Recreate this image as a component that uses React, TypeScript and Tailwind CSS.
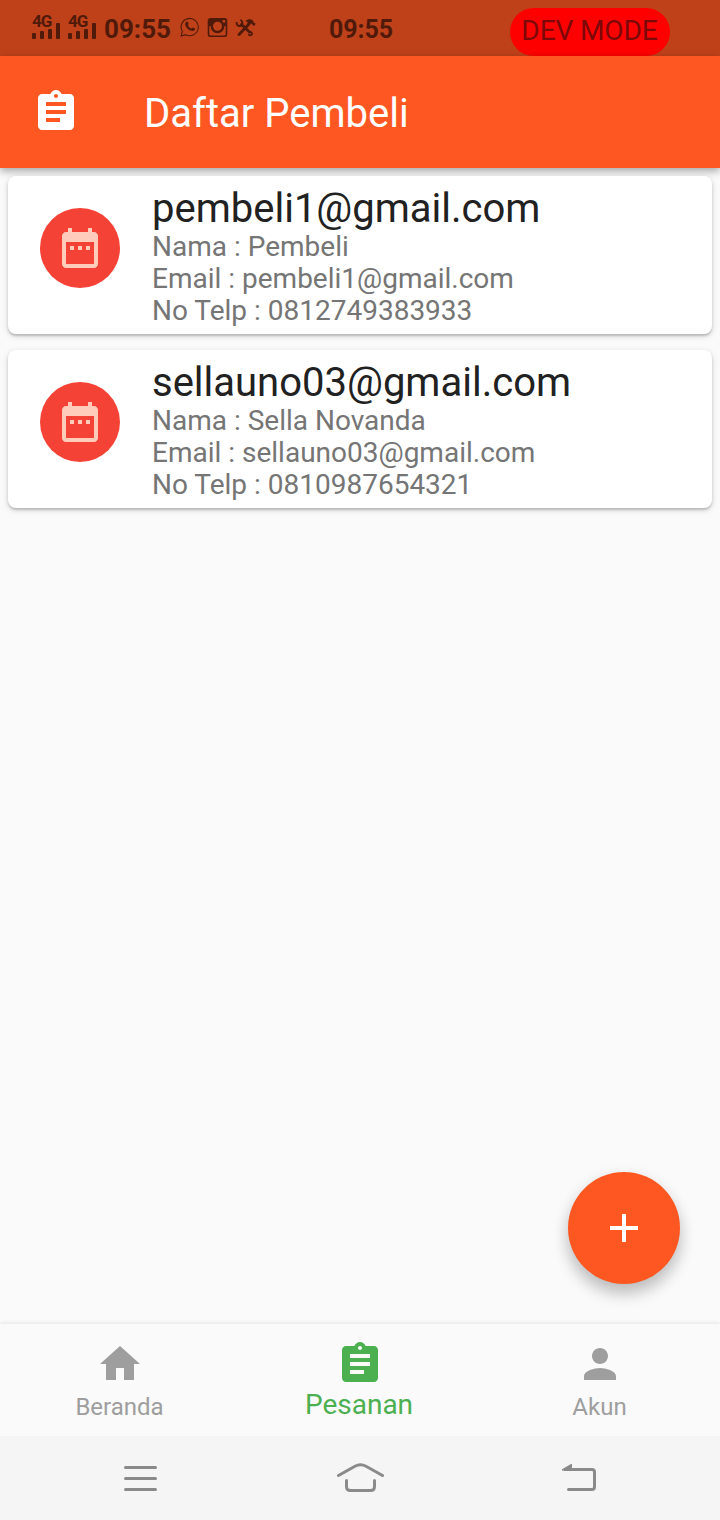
import type { ReactNode } from "react";

const ASSIGNMENT =
  "M19 3h-4.18C14.4 1.84 13.3 1 12 1c-1.3 0-2.4.84-2.82 2H5c-1.1 0-2 .9-2 2v14c0 1.1.9 2 2 2h14c1.1 0 2-.9 2-2V5c0-1.1-.9-2-2-2zm-7 0c.55 0 1 .45 1 1s-.45 1-1 1-1-.45-1-1 .45-1 1-1zm2 14H7v-2h7v2zm3-4H7v-2h10v2zm0-4H7V7h10v2z";
const DATE_RANGE =
  "M9 11H7v2h2v-2zm4 0h-2v2h2v-2zm4 0h-2v2h2v-2zm2-7h-1V2h-2v2H8V2H6v2H5c-1.11 0-1.99.9-1.99 2L3 20c0 1.1.89 2 2 2h14c1.1 0 2-.9 2-2V6c0-1.1-.9-2-2-2zm0 16H5V9h14v11z";
const HOME = "M10 20v-6h4v6h5v-8h3L12 3 2 12h3v8z";
const PERSON =
  "M12 12c2.21 0 4-1.79 4-4s-1.79-4-4-4-4 1.79-4 4 1.79 4 4 4zm0 2c-2.67 0-8 1.34-8 4v2h16v-2c0-2.66-5.33-4-8-4z";
const ADD = "M19 13h-6v6h-2v-6H5v-2h6V5h2v6h6v2z";

function Icon({ d }: { d: string }) {
  return (
    <svg viewBox="0 0 24 24" className="size-12 shrink-0 fill-current">
      <path d={d} />
    </svg>
  );
}

function Signal() {
  return (
    <div className="flex w-7 flex-col">
      <span className="h-3 text-[17px] leading-[13px] font-bold tracking-[-1px]">4G</span>
      <svg viewBox="0 0 28 16" className="-mt-1 h-4 w-7 fill-current">
        <rect x="0" y="10" width="4" height="6" rx="1" />
        <rect x="8" y="8" width="4" height="8" rx="1" />
        <rect x="16" y="6" width="4" height="10" rx="1" />
        <rect x="24" y="0" width="4" height="16" rx="1" />
      </svg>
    </div>
  );
}

function StatusBar() {
  return (
    <div className="flex h-14 shrink-0 items-start bg-[#bf411a] pl-8 text-[#501a0a]">
      <div className="flex gap-2 pt-[15px]">
        <Signal />
        <Signal />
      </div>
      <span className="ml-2 w-[76px] pt-[13px] text-[26px] leading-8 font-bold whitespace-nowrap">09:55</span>
      <svg viewBox="0 0 20 20" className="mt-[17px] size-5" fill="none" stroke="currentColor" strokeWidth="1.1">
        <path d="M1.2 19l1.1-4.6A8.6 8.6 0 1 1 5.8 17.700z" />
        <path
          d="M6.200 4.900c.7-.6 1.500-.3 1.800.4l.6 1.500c.2.6-.8 1.100-.6 1.600.7 1.400 1.800 2.400 3.300 3 .5.2 1-1.200 1.600-.9l1.900.9c.6.3.4 1.100-.1 1.700-1.100 1.200-3 1-4.800.1-2-1-3.700-2.700-4.400-4.500-.6-1.500-.4-2.900.7-3.800z"
          fill="currentColor"
          stroke="none"
        />
      </svg>
      <svg viewBox="0 0 21 20" className="ml-[7px] mt-[17px] h-5 w-[21px]" fill="none" stroke="currentColor">
        <rect x="1.500" y="1.700" width="18" height="17.500" rx="2" strokeWidth="1.600" />
        <path d="M1.500 8V3.500L3.500 1.500H18.500l1 1.500v6h-3v-1h-12v1h-3z" fill="currentColor" stroke="none" />
        <circle cx="10.500" cy="9.300" r="5.700" strokeWidth="2.400" fill="#bf411a" />
        <rect x="15.600" y="3" width="2.600" height="2.600" fill="#bf411a" stroke="none" />
      </svg>
      <svg viewBox="0 0 22 20" className="ml-[7px] mt-[18px] h-5 w-[22px]" fill="none" stroke="currentColor">
        <path d="M5.500 5.500L15.500 15" strokeWidth="2.600" />
        <path d="M1.800 4c-.8 3 1.300 4.700 4.200 3.800 2.500-1.500 1.500-5.300-.7-5.900" strokeWidth="2" />
        <path d="M13.500 16.200c.6 1.500 2.500 1.600 3.400.3.600-1.400-.6-3-2.200-2.600" strokeWidth="1.800" />
        <path d="M4 16.500L14 6" strokeWidth="2.800" strokeLinecap="round" />
        <path d="M10.500 3.200C12.500 1 16 .6 18.300 3l.6 2 1.900.6-1.500 2.500-1.800-1-.8-1.700-2 .8-1.200 1.500-1.500-1.500.8-2.300z" fill="currentColor" stroke="none" />
      </svg>
      <span className="ml-[72px] w-[181px] pt-[14px] text-[25px] leading-8 font-bold tracking-[-0.1px]">09:55</span>
      <span className="mt-2 flex h-12 w-40 items-center justify-center rounded-full bg-[#ff0000] pr-px pb-[3px] text-[28px] tracking-[-0.1px] whitespace-nowrap text-[#7d0808]">
        DEV MODE
      </span>
    </div>
  );
}

interface Buyer {
  email: string;
  name: string;
  phone: string;
}

const buyers: Buyer[] = [
  { email: "pembeli1@gmail.com", name: "Pembeli", phone: "0812749383933" },
  { email: "sellauno03@gmail.com", name: "Sella Novanda", phone: "0810987654321" },
];

function BuyerCard({ email, name, phone }: Buyer) {
  return (
    <article className="flex h-[158px] gap-8 rounded-lg bg-white px-8 pt-2 shadow-[0_2px_2px_rgba(0,0,0,0.16),0_2px_6px_rgba(0,0,0,0.16)]">
      <div className="mt-6 flex size-20 shrink-0 items-center justify-center rounded-full bg-[#f44336] text-[#ffccbc]">
        <Icon d={DATE_RANGE} />
      </div>
      <div className="text-[28px] leading-8 whitespace-nowrap text-[#757575]">
        <h2 className="h-[47px] text-[40px] leading-[49px] text-[#212121]">{email}</h2>
        <p>Nama : {name}</p>
        <p>Email : {email}</p>
        <p>No Telp : {phone}</p>
      </div>
    </article>
  );
}

function NavItem({ d, children }: { d: string; children: ReactNode }) {
  return (
    <button className="flex flex-1 flex-col items-center pt-4 text-[24px] leading-[34px] text-[#9e9e9e]">
      <Icon d={d} />
      <span className="mt-0.5 pr-px">{children}</span>
    </button>
  );
}

export default function App() {
  return (
    <div className="flex h-[1520px] w-[720px] flex-col overflow-hidden bg-[#fafafa] font-['Roboto',sans-serif]">
      <StatusBar />
      <header className="relative flex h-28 shrink-0 items-center bg-[#ff5722] pl-8 text-white shadow-[0_3px_8px_rgba(0,0,0,0.35)]">
        <Icon d={ASSIGNMENT} />
        <h1 className="ml-16 pt-1 text-[40px] leading-[48px]">Daftar Pembeli</h1>
      </header>
      <main className="relative flex flex-1 flex-col gap-4 p-2">
        {buyers.map((buyer) => (
          <BuyerCard key={buyer.email} {...buyer} />
        ))}
        <button className="absolute right-10 bottom-10 flex size-28 items-center justify-center rounded-full bg-[#ff5722] text-white shadow-[0_10px_16px_rgba(0,0,0,0.22),0_3px_18px_rgba(0,0,0,0.06)]">
          <Icon d={ADD} />
        </button>
      </main>
      <nav className="flex h-28 shrink-0 bg-[#fafafa] shadow-[0_-1px_4px_rgba(0,0,0,0.09)]">
        <NavItem d={HOME}>Beranda</NavItem>
        <button className="flex flex-1 flex-col items-center pt-4 text-[28px] leading-8 text-[#4caf50]">
          <Icon d={ASSIGNMENT} />
          <span className="mt-px pr-0.5">Pesanan</span>
        </button>
        <NavItem d={PERSON}>Akun</NavItem>
      </nav>
      <footer className="relative flex h-[84px] shrink-0 items-center justify-between bg-[#f5f5f5] px-[116px] text-[#8a8a8a]">
        <svg viewBox="0 0 48 48" className="size-12" fill="none" stroke="currentColor" strokeWidth="3" strokeLinecap="round">
          <path d="M9.500 13.500h30M9.500 24.500h30M9.500 35.500h30" />
        </svg>
        <svg viewBox="0 0 48 48" className="size-12" fill="none" stroke="currentColor" strokeWidth="3" strokeLinecap="round" strokeLinejoin="round">
          <path d="M2.500 21.500L19 12.300q5.500-3 11 0L46.500 21.500" />
          <path d="M10.500 26.500v6q0 4 4 4h20q4 0 4-4v-6" />
        </svg>
        <svg viewBox="0 0 48 48" className="size-12" fill="none" stroke="currentColor" strokeWidth="3" strokeLinecap="round">
          <path d="M8 15.500h28q2.500 0 2.500 2.500v15q0 2.500-2.500 2.500H12.500" strokeLinecap="butt" />
          <path d="M12.500 35.500h2" />
          <path d="M6 16.700v-1.400L15 10h1v5.500z" fill="currentColor" stroke="none" />
        </svg>
      </footer>
    </div>
  );
}
